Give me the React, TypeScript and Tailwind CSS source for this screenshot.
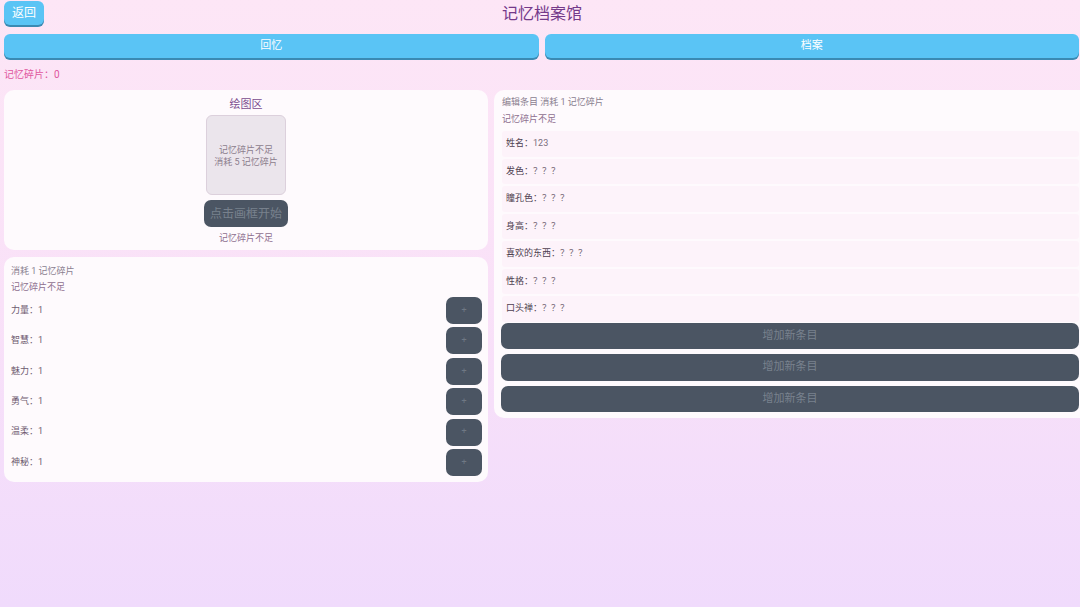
import { useState } from "react";

const FONT = { fontFamily: 'Roboto, "Noto Sans CJK SC", sans-serif' };

const STATS = [
  { name: "力量", value: 1 },
  { name: "智慧", value: 1 },
  { name: "魅力", value: 1 },
  { name: "勇气", value: 1 },
  { name: "温柔", value: 1 },
  { name: "神秘", value: 1 },
];

const ENTRIES = [
  { label: "姓名", value: "123" },
  { label: "发色", value: "？？？" },
  { label: "瞳孔色", value: "？？？" },
  { label: "身高", value: "？？？" },
  { label: "喜欢的东西", value: "？？？" },
  { label: "性格", value: "？？？" },
  { label: "口头禅", value: "？？？" },
];

function BlueButton({
  label,
  className,
  onClick,
}: {
  label: string;
  className: string;
  onClick?: () => void;
}) {
  return (
    <button
      type="button"
      onClick={onClick}
      className={`block bg-[#5ac4f5] text-white rounded-md shadow-[0_2px_0_#3a8ab3] ${className}`}
    >
      {label}
    </button>
  );
}

function DrawingCard() {
  return (
    <div className="bg-[#fefafd] rounded-[10px] pt-[8px] pb-[6px] flex flex-col items-center">
      <div className="text-[11px] leading-[14px] text-[#7a4a8e]">绘图区</div>
      <div className="mt-[3px] w-20 h-20 rounded-[6px] bg-[#ebe5ec] border border-[#dcd0dc] flex flex-col items-center justify-center pt-px text-[9px] leading-[12px] text-[#8c7d8c]">
        <span>记忆碎片不足</span>
        <span>消耗 5 记忆碎片</span>
      </div>
      <button
        type="button"
        className="mt-[5px] w-[84px] h-[27px] rounded-[7px] bg-[#4b5563] text-[12px] text-[#78818d]"
      >
        点击画框开始
      </button>
      <div className="mt-[5px] text-[9px] leading-[12px] text-[#8e6f8f]">记忆碎片不足</div>
    </div>
  );
}

function StatsCard() {
  return (
    <div className="bg-[#fefafd] rounded-[10px] pl-[7px] pr-[6px] pt-[8px] pb-[6px] flex flex-col">
      <div className="text-[9px] leading-[12px] text-[#8a8090]">消耗 1 记忆碎片</div>
      <div className="mt-[4px] text-[9px] leading-[12px] text-[#8e6f8f]">记忆碎片不足</div>
      <div className="mt-[4px] flex flex-col gap-[3.4px]">
        {STATS.map((s) => (
          <div key={s.name} className="flex items-center justify-between h-[27px]">
            <span className="text-[9px] text-[#6e5a70]">
              {s.name}：{s.value}
            </span>
            <button
              type="button"
              className="w-9 h-[27px] rounded-[7px] bg-[#4b5563] text-[9px] text-[#6f7884]"
            >
              +
            </button>
          </div>
        ))}
      </div>
    </div>
  );
}

function ArchiveCard() {
  return (
    <div className="bg-[#fefafd] rounded-l-[10px] pl-[7px] pr-px pt-[6px] pb-[6px] flex flex-col">
      <div className="pl-px text-[9px] leading-[12px] text-[#8a8090]">编辑条目 消耗 1 记忆碎片</div>
      <div className="pl-px mt-[5px] text-[9px] leading-[12px] text-[#8e6f8f]">记忆碎片不足</div>
      <div className="mt-[5px] flex flex-col">
        {ENTRIES.map((e) => (
          <div key={e.label} className="h-[27.5px] py-px pl-px">
            <div className="h-full bg-[#fdf3fa] rounded-[3px] flex items-center pl-[4px] text-[9px] text-[#4e3f50]">
              {e.label}：<span className="text-[#7a6e7c]">{e.value}</span>
            </div>
          </div>
        ))}
      </div>
      <div className="flex flex-col gap-[5px]">
        {[0, 1, 2].map((i) => (
          <button
            key={i}
            type="button"
            className="h-[26.5px] rounded-[7px] bg-[#4b5563] text-[11px] text-[#79828e]"
          >
            增加新条目
          </button>
        ))}
      </div>
    </div>
  );
}

export default function App() {
  const [tab, setTab] = useState("回忆");

  return (
    <div
      className="w-[1080px] h-[607px] overflow-hidden bg-gradient-to-b from-[#fde6f6] via-[#f9e1f8] to-[#f0dbfc] pl-1"
      style={FONT}
      data-tab={tab}
    >
      <div className="flex items-start h-[28px] pt-[1px]">
        <BlueButton label="返回" className="w-10 h-[24px] text-[12px]" />
        <div className="flex-1 text-center text-[16px] leading-[26px] text-[#74398a]">记忆档案馆</div>
        <div className="w-10" />
      </div>

      <div className="mt-[6px] grid grid-cols-2 gap-[6px] pr-px">
        {["回忆", "档案"].map((t) => (
          <BlueButton key={t} label={t} onClick={() => setTab(t)} className="w-full h-[24px] text-[11px]" />
        ))}
      </div>

      <div className="mt-[11px] h-[12px] text-[10px] leading-[12px] text-[#e0559e]">记忆碎片：0</div>

      <div className="mt-[9px] grid grid-cols-[484px_1fr] gap-[6px] items-start">
        <div className="flex flex-col gap-[7px]">
          <DrawingCard />
          <StatsCard />
        </div>
        <ArchiveCard />
      </div>
    </div>
  );
}
